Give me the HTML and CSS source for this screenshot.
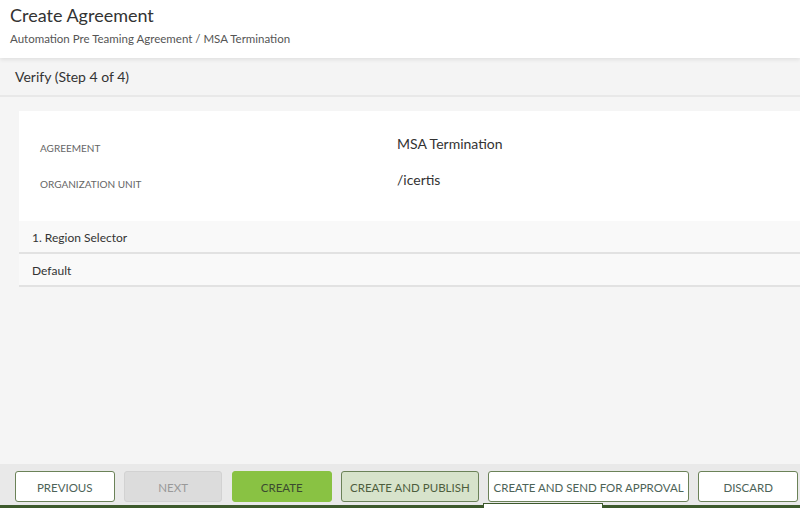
FILE: index.html
```html
<!DOCTYPE html>
<html lang="en">

<head>
    <meta charset="UTF-8">
    <meta name="viewport" content="width=device-width, initial-scale=1.0">
    <title>Create Agreement</title>
    <link rel="stylesheet" href="styles.css">
</head>

<body>
    <div class="page">
        <div class="header">
            <h1 class="title">Create Agreement</h1>
            <div class="crumb">Automation Pre Teaming Agreement / MSA Termination</div>
        </div>
        <div class="step">Verify (Step 4 of 4)</div>
        <div class="main">
            <div class="card">
                <div class="field">
                    <div class="label">AGREEMENT</div>
                    <div class="value">MSA Termination</div>
                </div>
                <div class="field">
                    <div class="label">ORGANIZATION UNIT</div>
                    <div class="value">/icertis</div>
                </div>
            </div>
            <div class="row">1. Region Selector</div>
            <div class="row">Default</div>
        </div>
        <div class="footer">
            <button class="btn">PREVIOUS</button>
            <button class="btn disabled">NEXT</button>
            <button class="btn primary">CREATE</button>
            <button class="btn light">CREATE AND PUBLISH</button>
            <button class="btn wide">CREATE AND SEND FOR APPROVAL</button>
            <button class="btn">DISCARD</button>
            <div class="tab"></div>
        </div>
    </div>
</body>

</html>
```

FILE: styles.css
```css
html,
body {
    padding: 0;
    margin: 0;
}

body {
    font-family: Lato, "Open Sans", sans-serif;
    color: #333;
    background-color: #f5f5f5;
    overflow: hidden;
}

.page {
    width: 800px;
    height: 508px;
    display: flex;
    flex-direction: column;
    position: relative;
}

.header {
    height: 58px;
    background-color: #fff;
    padding: 4px 10px 0;
    box-sizing: border-box;
    box-shadow: 0 2px 4px rgba(0, 0, 0, 0.08);
    position: relative;
    z-index: 1;
}

.title {
    margin: 0;
    font-size: 18px;
    font-weight: normal;
    line-height: 22px;
    color: #333;
}

.crumb {
    margin-top: 6px;
    font-size: 11.5px;
    color: #555;
}

.step {
    height: 37px;
    line-height: 37px;
    padding-left: 15px;
    font-size: 14px;
    color: #333;
    background-color: #f4f4f4;
    border-bottom: 2px solid #e8e8e8;
}

.main {
    flex: 1;
    padding: 14px 0 0 19px;
}

.card {
    background-color: #fff;
    padding: 17px 0 21px 21px;
}

.field {
    display: flex;
    height: 36px;
    align-items: center;
}

.label {
    width: 357px;
    font-size: 10px;
    color: #666;
    margin-top: 4px;
}

.value {
    font-size: 14px;
    color: #333;
    margin-top: -5px;
}

.row {
    height: 31px;
    line-height: 33px;
    padding-left: 13px;
    font-size: 12px;
    color: #333;
    background-color: #f9f9f9;
    border-bottom: 2px solid #e2e2e2;
}

.footer {
    height: 34px;
    flex-shrink: 0;
    background-color: #e9e9e9;
    border-bottom: 3px solid #3d5a2c;
    display: flex;
    align-items: flex-start;
    gap: 9.4px;
    padding: 7px 0 0 15px;
    position: relative;
}

.btn {
    width: 99.5px;
    height: 31px;
    font-family: Lato, "Open Sans", sans-serif;
    font-size: 11.5px;
    line-height: 31px;
    color: #4d6357;
    background-color: #fff;
    border: 1px solid #6b8258;
    border-radius: 3px;
    padding: 0;
}

.btn.disabled {
    width: 98.5px;
    color: #999;
    background-color: #dcdcdc;
    border-color: #d2d2d2;
}

.btn.primary {
    width: 100px;
    color: #3b4a30;
    background-color: #89c243;
    border-color: #89c243;
}

.btn.light {
    width: 137.5px;
    color: #4d5d3d;
    background-color: #d7e3cb;
}

.btn.wide {
    width: 201px;
}

.tab {
    position: absolute;
    left: 483px;
    bottom: -3px;
    width: 118px;
    height: 4px;
    background-color: #fff;
    border: 1px solid #3d5a2c;
    border-bottom: none;
}
```
